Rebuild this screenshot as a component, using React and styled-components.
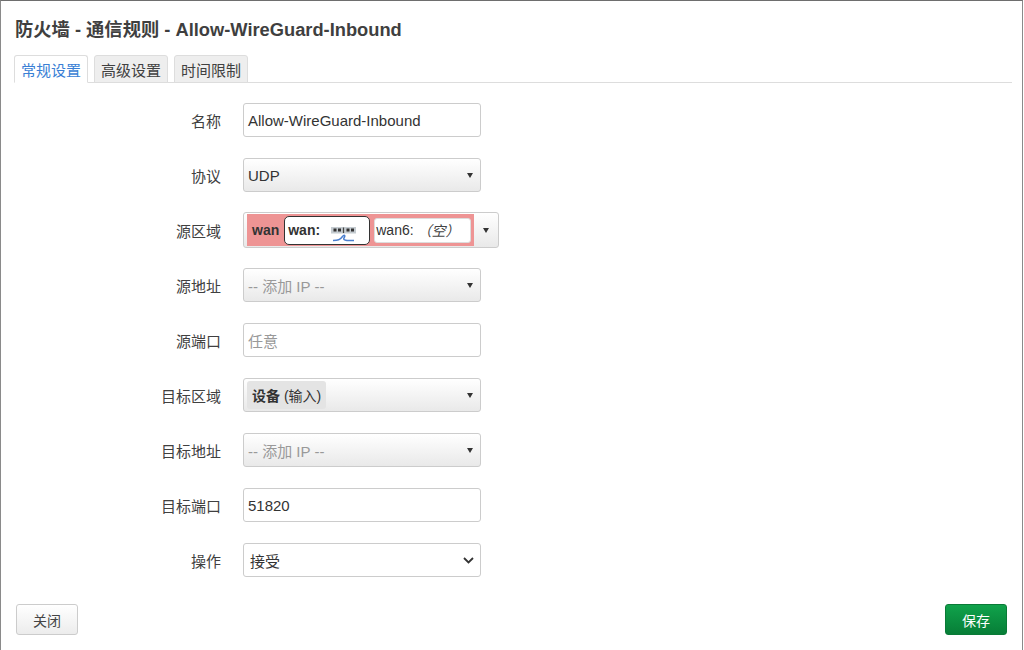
import styled, { createGlobalStyle } from 'styled-components';

const GlobalStyle = createGlobalStyle`
  html, body {
    margin: 0;
    padding: 0;
    background: #fff;
  }
  body {
    font-family: "Liberation Sans", "Noto Sans CJK SC", sans-serif;
    font-size: 15px;
    color: #404040;
  }
`;

const Modal = styled.div`
  box-sizing: border-box;
  width: 1023px;
  height: 650px;
  border: 1px solid #8a8a8a;
  border-bottom: none;
  border-top-color: #6e6e6e;
  background: #fff;
  display: flex;
  flex-direction: column;
`;

const Title = styled.h4`
  margin: 17px 0 0 14px;
  font-size: 18.3px;
  line-height: 24px;
  font-weight: bold;
  color: #3f3f3f;
`;

const Tabs = styled.ul`
  list-style: none;
  display: flex;
  gap: 6px;
  margin: 13px 10px 0 13px;
  padding: 0;
  height: 27px;
  border-bottom: 1px solid #ddd;
`;

const Tab = styled.li`
  box-sizing: border-box;
  height: 28px;
  padding: 0 6px;
  display: flex;
  align-items: center;
  border: 1px solid #ddd;
  border-radius: 3px 3px 0 0;
  background: ${(p) => (p.$active ? '#fff' : '#eee')};
  border-bottom-color: ${(p) => (p.$active ? '#fff' : '#ddd')};
  color: ${(p) => (p.$active ? '#3a7fd5' : '#404040')};
  font-size: 15px;
`;

const Form = styled.div`
  display: grid;
  grid-template-columns: 207px 256px;
  grid-auto-rows: 34px;
  column-gap: 22px;
  row-gap: 21px;
  align-items: center;
  margin: 20px 0 0 13px;
`;

const Label = styled.label`
  text-align: right;
  font-size: 15px;
  color: #404040;
`;

const TextInput = styled.div`
  box-sizing: border-box;
  width: 238px;
  height: 34px;
  border: 1px solid #ccc;
  border-radius: 3px;
  background: #fff;
  padding: 0 3px 0 4px;
  display: flex;
  align-items: center;
  color: ${(p) => (p.$placeholder ? '#999' : '#333')};
`;

const Select = styled.div`
  box-sizing: border-box;
  width: ${(p) => p.$width || 238}px;
  height: ${(p) => p.$height || 34}px;
  border: 1px solid #ccc;
  border-radius: 3px;
  background: linear-gradient(#fff, #e9e9e9);
  padding: ${(p) => p.$pad || '0 7px 0 4px'};
  display: flex;
  align-items: center;
  justify-content: space-between;
  color: ${(p) => (p.$placeholder ? '#999' : '#333')};
`;

const Caret = styled.span`
  width: 0;
  height: 0;
  border-left: 3px solid transparent;
  border-right: 3px solid transparent;
  border-top: 5px solid #333;
  flex: none;
`;

const NativeSelect = styled.div`
  box-sizing: border-box;
  width: 238px;
  height: 34px;
  border: 1px solid #ccc;
  border-radius: 3px;
  background: #fff;
  padding: 0 6px 0 6px;
  display: flex;
  align-items: center;
  justify-content: space-between;
  color: #333;
`;

const ZoneBox = styled.div`
  flex: 1;
  align-self: stretch;
  margin: 1px 0 1px 3px;
  background: #ee9494;
  display: flex;
  align-items: center;
  gap: 4px;
  padding: 0 3px 0 5px;
`;

const ZoneName = styled.b`
  color: #333;
  font-size: 14px;
  margin-right: 1px;
`;

const Badge = styled.span`
  box-sizing: border-box;
  height: ${(p) => (p.$strong ? 29 : 25)}px;
  width: ${(p) => p.$w}px;
  display: flex;
  align-items: center;
  gap: 4px;
  padding: 0 ${(p) => (p.$strong ? 3 : 1)}px;
  background: #fff;
  border: 1px solid ${(p) => (p.$strong ? '#333' : '#ddd')};
  border-radius: ${(p) => (p.$strong ? 5 : 3)}px;
  color: #333;
  font-size: 14px;
  font-weight: ${(p) => (p.$strong ? 'bold' : 'normal')};
`;

const Empty = styled.i`
  color: #444;
`;

const IconSlot = styled.span`
  display: flex;
  margin: 9px 0 0 7px;
`;

const ZoneCaret = styled.span`
  width: 25px;
  display: flex;
  justify-content: center;
`;

const Pill = styled.span`
  background: #e4e4e4;
  border-radius: 3px;
  padding: 4px 5px;
  margin-left: -1px;
  color: #333;
  font-size: 14px;
`;

const Footer = styled.div`
  margin-top: auto;
  margin-bottom: 15px;
  padding: 0 15px;
  display: flex;
  justify-content: space-between;
`;

const Button = styled.button`
  box-sizing: border-box;
  width: 62px;
  height: 31px;
  border-radius: 3px;
  font-family: inherit;
  font-size: 14px;
  border: 1px solid ${(p) => (p.$primary ? '#0a7a37' : '#ccc')};
  background: ${(p) =>
    p.$primary ? 'linear-gradient(#10a24b, #077e37)' : 'linear-gradient(#fff, #ececec)'};
  color: ${(p) => (p.$primary ? '#fff' : '#444')};
`;

const PortIcon = () => (
  <svg width="26" height="15" viewBox="0 0 26 15">
    <rect x="0" y="0" width="25" height="6.5" fill="#c4cbd0" />
    <rect x="2.5" y="1.5" width="3" height="3" fill="#333" />
    <rect x="7" y="1.5" width="3" height="3" fill="#333" />
    <rect x="15.5" y="1.5" width="3" height="3" fill="#333" />
    <rect x="20" y="1.5" width="3" height="3" fill="#333" />
    <path d="M12.5 0.5 L12.5 6" stroke="#444" strokeWidth="1.2" />
    <path
      d="M2 13.5 C7 13.5 9 13 11.5 9.5 C13 7.5 15 8 13 11 C11.5 13.5 16 13.5 23 13.5"
      stroke="#4a7fd0"
      strokeWidth="1.5"
      fill="none"
    />
  </svg>
);

const App = () => (
  <>
    <GlobalStyle />
    <Modal>
      <Title>防火墙 - 通信规则 - Allow-WireGuard-Inbound</Title>
      <Tabs>
        <Tab $active>常规设置</Tab>
        <Tab>高级设置</Tab>
        <Tab>时间限制</Tab>
      </Tabs>
      <Form>
        <Label>名称</Label>
        <TextInput>Allow-WireGuard-Inbound</TextInput>

        <Label>协议</Label>
        <Select>
          UDP
          <Caret />
        </Select>

        <Label>源区域</Label>
        <Select $width={256} $height={36} $pad="0">
          <ZoneBox>
            <ZoneName>wan</ZoneName>
            <Badge $strong $w={86}>
              wan:
              <IconSlot>
                <PortIcon />
              </IconSlot>
            </Badge>
            <Badge $w={97}>
              wan6:
              <Empty>（空）</Empty>
            </Badge>
          </ZoneBox>
          <ZoneCaret>
            <Caret />
          </ZoneCaret>
        </Select>

        <Label>源地址</Label>
        <Select $placeholder>
          -- 添加 IP --
          <Caret />
        </Select>

        <Label>源端口</Label>
        <TextInput $placeholder>任意</TextInput>

        <Label>目标区域</Label>
        <Select>
          <Pill>
            <b>设备</b> (输入)
          </Pill>
          <Caret />
        </Select>

        <Label>目标地址</Label>
        <Select $placeholder>
          -- 添加 IP --
          <Caret />
        </Select>

        <Label>目标端口</Label>
        <TextInput>51820</TextInput>

        <Label>操作</Label>
        <NativeSelect>
          接受
          <svg width="11" height="7" viewBox="0 0 11 7">
            <path d="M1 1 L5.5 5.5 L10 1" stroke="#333" strokeWidth="1.8" fill="none" />
          </svg>
        </NativeSelect>
      </Form>
      <Footer>
        <Button>关闭</Button>
        <Button $primary>保存</Button>
      </Footer>
    </Modal>
  </>
);

export default App;
